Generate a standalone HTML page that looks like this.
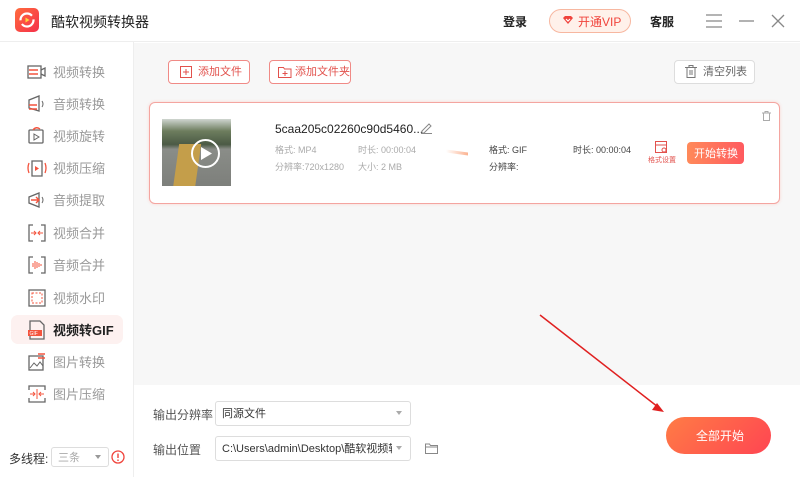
<!DOCTYPE html>
<html><head><meta charset="utf-8"><style>
*{margin:0;padding:0;box-sizing:border-box}
body{width:800px;height:477px;overflow:hidden;background:#fff;font-family:"Liberation Sans","Noto Sans CJK SC",sans-serif;position:relative}
.a{position:absolute}
.t{white-space:nowrap;line-height:1.2}
.side .it{position:absolute;left:0;width:133px;height:30px}
.side .lb{position:absolute;left:53px;top:8px;font-size:13px;color:#999}
.side svg{position:absolute;left:27px;top:5px}
.btn{position:absolute;border:1px solid #f08a86;border-radius:4px;background:#fff;color:#e2514c;font-size:11px}
.sm{font-size:9px;color:#aaa}
</style></head><body>
<div class="a" style="left:0;top:0;width:800px;height:42px;background:#fff;border-bottom:1px solid #eee"></div>
<div class="a" style="left:15px;top:8px;width:24px;height:24px;border-radius:5px;background:linear-gradient(135deg,#ff6b3d,#f5304a)">
<svg width="24" height="24"><circle cx="12" cy="12" r="6.5" fill="none" stroke="#fff" stroke-width="2.2" stroke-dasharray="16 4"/><path d="M10.5 9.5l4 2.5-4 2.5z" fill="#ffd43b"/></svg></div>
<div class="a t" style="left:51px;top:14px;font-size:14px;color:#222">酷软视频转换器</div>
<div class="a t" style="left:503px;top:15px;font-size:12px;color:#222;font-weight:bold">登录</div>
<div class="a" style="left:549px;top:9px;width:82px;height:24px;border:1px solid #f7b7a0;border-radius:12px;background:#fff1ea"></div>
<svg class="a" style="left:562px;top:15px" width="12" height="11"><path d="M1 3l2-2h6l2 2-5 6z" fill="#f0443c"/><path d="M4 4l2 2 2-2" stroke="#fff" stroke-width="1.2" fill="none"/></svg>
<div class="a t" style="left:578px;top:15px;font-size:12px;color:#f0443c">开通VIP</div>
<div class="a t" style="left:650px;top:15px;font-size:12px;color:#222;font-weight:bold">客服</div>
<svg class="a" style="left:706px;top:14px" width="16" height="14"><path d="M0 1h16M0 7h16M0 13h16" stroke="#888" stroke-width="1.3"/></svg>
<svg class="a" style="left:739px;top:14px" width="16" height="14"><path d="M0 7h15" stroke="#888" stroke-width="1.3"/></svg>
<svg class="a" style="left:771px;top:14px" width="14" height="14"><path d="M1 1l12 12M13 1L1 13" stroke="#888" stroke-width="1.3"/></svg>
<div class="a" style="left:133px;top:42px;width:1px;height:435px;background:#eee"></div>
<div class="a" style="left:11px;top:315px;width:112px;height:29px;border-radius:7px;background:#fdf1f0"></div>
<div class="side">
<div class="it" style="top:57px"><svg width="20" height="20"><rect x="1" y="4" width="13" height="12" fill="none" stroke="#666" stroke-width="1.3"/><path d="M14 8l4-2v8l-4-2" fill="none" stroke="#666" stroke-width="1.3"/><path d="M2 8h9M2 12h9" stroke="#f4543e" stroke-width="1.6"/></svg><div class="lb t">视频转换</div></div>
<div class="it" style="top:89px"><svg width="20" height="20"><path d="M2 6l10-4v15L2 14z" fill="none" stroke="#666" stroke-width="1.3"/><path d="M15 7q2 3 0 6" stroke="#666" fill="none"/><path d="M2 11h8M2 15h8" stroke="#f4543e" stroke-width="1.6"/></svg><div class="lb t">音频转换</div></div>
<div class="it" style="top:121px"><svg width="20" height="20"><rect x="2" y="4" width="14" height="13" rx="1" fill="none" stroke="#666" stroke-width="1.3"/><path d="M7 8l5 3-5 3z" fill="none" stroke="#666"/><path d="M6 4q3-4 7-1" stroke="#f4543e" stroke-width="1.4" fill="none"/></svg><div class="lb t">视频旋转</div></div>
<div class="it" style="top:153px"><svg width="20" height="20"><path d="M5 3h10v15H5z" fill="none" stroke="#666" stroke-width="1.3"/><path d="M8 8l4 2.5-4 2.5z" fill="#f4543e"/><path d="M2 5q-2 5 0 10M18 5q2 5 0 10" stroke="#f4543e" fill="none" stroke-width="1.3"/></svg><div class="lb t">视频压缩</div></div>
<div class="it" style="top:185px"><svg width="20" height="20"><path d="M2 7l10-4v14L2 13z" fill="none" stroke="#666" stroke-width="1.3"/><path d="M15 7q2 3 0 6" stroke="#666" fill="none"/><path d="M4 10h8M9 7l3 3-3 3" stroke="#f4543e" stroke-width="1.4" fill="none"/></svg><div class="lb t">音频提取</div></div>
<div class="it" style="top:218px"><svg width="20" height="20"><path d="M6 2H2v16h4M14 2h4v16h-4" fill="none" stroke="#666" stroke-width="1.3"/><path d="M4 10h5M16 10h-5M7 8l2 2-2 2M13 8l-2 2 2 2" stroke="#f4543e" fill="none"/></svg><div class="lb t">视频合并</div></div>
<div class="it" style="top:250px"><svg width="20" height="20"><path d="M6 2H2v16h4M14 2h4v16h-4" fill="none" stroke="#666" stroke-width="1.3"/><path d="M6 8v4M8 6v8M10 7v6M12 8v4M14 9v2" stroke="#f4543e"/></svg><div class="lb t">音频合并</div></div>
<div class="it" style="top:283px"><svg width="20" height="20"><rect x="2" y="2" width="16" height="16" fill="none" stroke="#666" stroke-width="1.3"/><rect x="5" y="5" width="10" height="10" fill="none" stroke="#f4543e" stroke-dasharray="2 1.5"/></svg><div class="lb t">视频水印</div></div>
<div class="it" style="top:315px"><svg width="20" height="20"><path d="M3 1h10l4 4v14H3z" fill="none" stroke="#666" stroke-width="1.3"/><rect x="1" y="10" width="14" height="6" fill="#f4543e"/><text x="2.5" y="15" font-size="5" fill="#fff" font-family="Liberation Sans">GIF</text></svg><div class="lb t" style="color:#222;font-weight:bold">视频转GIF</div></div>
<div class="it" style="top:347px"><svg width="20" height="20"><rect x="2" y="4" width="14" height="14" fill="none" stroke="#666" stroke-width="1.3"/><path d="M3 16l4-5 3 3 3-4 3 4" stroke="#666" fill="none"/><path d="M11 2h7M11 6h7" stroke="#f4543e" stroke-width="1.4"/></svg><div class="lb t">图片转换</div></div>
<div class="it" style="top:379px"><svg width="20" height="20"><path d="M2 6V2h16v4M2 14v4h16v-4" fill="none" stroke="#666" stroke-width="1.3"/><path d="M10 5v10M3 10h5M17 10h-5M6 8l2 2-2 2M14 8l-2 2 2 2" stroke="#f4543e" fill="none"/></svg><div class="lb t">图片压缩</div></div>
</div>
<div class="a t" style="left:9px;top:452px;font-size:12px;color:#333">多线程:</div>
<div class="a" style="left:51px;top:447px;width:58px;height:20px;border:1px solid #ddd;border-radius:3px"></div>
<div class="a t" style="left:58px;top:452px;font-size:11px;color:#aaa">三条</div>
<div class="a" style="left:95px;top:455px;border:3px solid transparent;border-top:4px solid #999"></div>
<svg class="a" style="left:111px;top:450px" width="14" height="14"><circle cx="7" cy="7" r="6" fill="none" stroke="#f0443c" stroke-width="1.3"/><path d="M7 3.5v4.5M7 9.5v1.5" stroke="#f0443c" stroke-width="1.4"/></svg>
<div class="a" style="left:134px;top:43px;width:666px;height:342px;background:#f7f7f7"></div>
<div class="btn" style="left:168px;top:60px;width:82px;height:24px"><svg class="a" style="left:11px;top:5px" width="12" height="12"><rect x=".5" y=".5" width="11" height="11" fill="none" stroke="#e2514c"/><path d="M6 3v6M3 6h6" stroke="#e2514c"/></svg><span class="a t" style="left:29px;top:5px">添加文件</span></div>
<div class="btn" style="left:269px;top:60px;width:82px;height:24px"><svg class="a" style="left:8px;top:5px" width="14" height="12"><path d="M.5 1.5h5l1 1.5h6.5v8.5H.5z" fill="none" stroke="#e2514c"/><path d="M7 5v5M4.5 7.5h5" stroke="#e2514c"/></svg><span class="a t" style="left:25px;top:5px">添加文件夹</span></div>
<div class="a" style="left:674px;top:60px;width:81px;height:24px;border:1px solid #ddd;border-radius:4px;background:#fff"></div>
<svg class="a" style="left:685px;top:65px" width="12" height="13"><path d="M0 2.5h12M4 2.5V.5h4v2M2 2.5v10h8v-10M5 5v5M7 5v5" fill="none" stroke="#777"/></svg>
<div class="a t" style="left:703px;top:66px;font-size:11px;color:#666">清空列表</div>
<div class="a" style="left:149px;top:102px;width:631px;height:102px;border:1px solid #f4a5a0;border-radius:6px;background:#fff;box-shadow:0 0 3px #fbd5d0"></div>
<div class="a" style="left:162px;top:119px;width:69px;height:67px;background:linear-gradient(#cfd5d0 0,#6d7d5e 18%,#4b5a45 38%,#8a8d88 45%,#7d7f7b 100%);overflow:hidden">
<div class="a" style="left:14px;top:25px;width:22px;height:45px;background:#c49e4a;transform:skewX(-8deg)"></div>
<div class="a" style="left:29px;top:20px;width:29px;height:29px;border-radius:50%;border:2px solid #fff"></div>
<svg class="a" style="left:38px;top:28px" width="12" height="13"><path d="M1 0l11 6.5L1 13z" fill="#fff"/></svg>
</div>
<div class="a t" style="left:275px;top:122px;font-size:12px;color:#222">5caa205c02260c90d5460...</div>
<svg class="a" style="left:420px;top:121px" width="13" height="13"><path d="M2 10l7-7 2 2-7 7H2zM1 12.5h11" fill="none" stroke="#888"/></svg>
<div class="a t sm" style="left:275px;top:145px">格式: MP4</div>
<div class="a t sm" style="left:358px;top:145px">时长: 00:00:04</div>
<div class="a t sm" style="left:275px;top:162px">分辨率:720x1280</div>
<div class="a t sm" style="left:358px;top:162px">大小: 2 MB</div>
<div class="a" style="left:446px;top:151px;width:22px;height:3px;background:linear-gradient(90deg,#fff,#fbb290);transform:skewY(8deg)"></div>
<div class="a t" style="left:489px;top:145px;font-size:9px;color:#444">格式: GIF</div>
<div class="a t" style="left:573px;top:145px;font-size:9px;color:#444">时长: 00:00:04</div>
<div class="a t" style="left:489px;top:162px;font-size:9px;color:#444">分辨率:</div>
<svg class="a" style="left:655px;top:141px" width="13" height="13"><rect x=".5" y=".5" width="11" height="11" fill="none" stroke="#e2514c"/><path d="M.5 4h11" stroke="#e2514c"/><circle cx="9" cy="9" r="2" fill="#fff" stroke="#e2514c"/></svg>
<div class="a t" style="left:648px;top:157px;font-size:7px;color:#e2514c">格式设置</div>
<div class="a" style="left:687px;top:142px;width:57px;height:22px;border-radius:4px;background:linear-gradient(90deg,#ff8a5a,#ff5a5f)"></div>
<div class="a t" style="left:694px;top:148px;font-size:11px;color:#fff">开始转换</div>
<svg class="a" style="left:762px;top:111px" width="9" height="10"><path d="M0 2h9M3 2V.5h3V2M1.5 2v7.5h6V2" fill="none" stroke="#aaa"/></svg>
<div class="a t" style="left:153px;top:408px;font-size:12px;color:#555">输出分辨率</div>
<div class="a" style="left:215px;top:401px;width:196px;height:25px;border:1px solid #ddd;border-radius:3px;background:#fff"></div>
<div class="a t" style="left:222px;top:408px;font-size:11px;color:#333">同源文件</div>
<div class="a" style="left:396px;top:411px;border:3px solid transparent;border-top:4px solid #aaa"></div>
<div class="a t" style="left:153px;top:443px;font-size:12px;color:#555">输出位置</div>
<div class="a" style="left:215px;top:436px;width:196px;height:25px;border:1px solid #ddd;border-radius:3px;background:#fff"></div>
<div class="a t" style="left:222px;top:443px;font-size:11px;color:#333;width:170px;overflow:hidden">C:\Users\admin\Desktop\酷软视频转换器</div>
<div class="a" style="left:396px;top:446px;border:3px solid transparent;border-top:4px solid #aaa"></div>
<svg class="a" style="left:425px;top:443px" width="13" height="11"><path d="M.5 1h4l1 1.5h7v8H.5z" fill="none" stroke="#888"/><path d="M.5 4h12" stroke="#888"/></svg>
<div class="a" style="left:666px;top:417px;width:105px;height:37px;border-radius:19px;background:linear-gradient(135deg,#ff7c45,#ff4552)"></div>
<div class="a t" style="left:696px;top:429px;font-size:12px;color:#fff">全部开始</div>
<svg class="a" style="left:530px;top:305px" width="140" height="110"><path d="M10 10L128 102" stroke="#e02020" stroke-width="1.5"/><path d="M134 107l-12-2 5-7z" fill="#e02020"/></svg>
</body></html>
